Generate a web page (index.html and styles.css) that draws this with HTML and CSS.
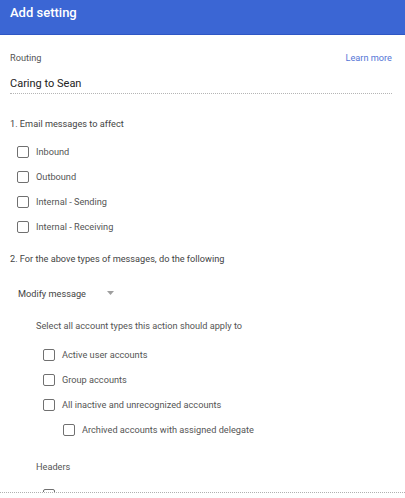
FILE: index.html
```html
<!DOCTYPE html>
<html>
<head>
<meta charset="utf-8">
<link rel="stylesheet" href="styles.css">
</head>
<body>
<div class="dialog">
  <header class="bar"><h1 class="title">Add setting</h1></header>
  <main class="content">
    <div class="row-between">
      <span class="label">Routing</span>
      <a class="link">Learn more</a>
    </div>
    <div class="name-field">Caring to Sean</div>

    <div class="section">1. Email messages to affect</div>
    <ul class="checks">
      <li class="check"><span class="box"></span><span>Inbound</span></li>
      <li class="check"><span class="box"></span><span>Outbound</span></li>
      <li class="check"><span class="box"></span><span>Internal - Sending</span></li>
      <li class="check"><span class="box"></span><span>Internal - Receiving</span></li>
    </ul>

    <div class="section second">2. For the above types of messages, do the following</div>
    <div class="select">
      <span>Modify message</span>
      <svg class="caret" width="7" height="4" viewBox="0 0 7 4"><path d="M0 0h7L3.5 4z" fill="#9e9e9e"/></svg>
    </div>

    <div class="sub">
      <div class="sub-title">Select all account types this action should apply to</div>
      <ul class="checks">
        <li class="check"><span class="box"></span><span>Active user accounts</span></li>
        <li class="check"><span class="box"></span><span>Group accounts</span></li>
        <li class="check"><span class="box"></span><span>All inactive and unrecognized accounts</span></li>
        <li class="check nested"><span class="box"></span><span>Archived accounts with assigned delegate</span></li>
      </ul>
      <div class="headers">Headers</div>
      <div class="check"><span class="box"></span></div>
    </div>
  </main>
  <div class="footer-line"></div>
</div>
</body>
</html>
```

FILE: styles.css
```css
* { box-sizing: border-box; }
html, body { margin: 0; padding: 0; }
body {
  width: 405px;
  height: 498px;
  overflow: hidden;
  background: #fff;
  font-family: Roboto, "Liberation Sans", Arial, sans-serif;
  color: #3c3c3c;
}
.dialog {
  position: relative;
  width: 405px;
  height: 498px;
  overflow: hidden;
}
.bar {
  height: 35px;
  background: #3b66d4;
  padding: 5px 10px 0;
  border-bottom: 1px solid #2e56c4;
}
.title {
  margin: 0;
  font-size: 13px;
  font-weight: 500;
  color: #fff;
  line-height: 16px;
}
.content {
  padding: 15px 13px 0 10px;
}
.row-between {
  display: flex;
  justify-content: space-between;
  align-items: center;
  height: 14px;
}
.label {
  font-size: 9.2px;
  color: #555;
}
.link {
  font-size: 9.2px;
  color: #5576d6;
}
.name-field {
  margin-top: 13px;
  font-size: 11px;
  color: #222;
  line-height: 14px;
  padding-bottom: 2px;
  border-bottom: 1px dotted #b5b5b5;
}
.section {
  margin-top: 24px;
  font-size: 9.2px;
  color: #444;
  line-height: 12px;
}
.section.second { margin-top: 20px; }
.checks {
  list-style: none;
  margin: 15px 0 0;
  padding: 0 0 0 7px;
  display: flex;
  flex-direction: column;
  gap: 12px;
}
.check {
  display: flex;
  align-items: center;
  gap: 7px;
  height: 13px;
  font-size: 9.2px;
  color: #555;
}
.box {
  width: 12px;
  height: 12px;
  border: 1.5px solid #707070;
  border-radius: 2px;
  flex: none;
}
.check.nested { margin-left: 20px; }
.select {
  margin: 22px 0 0 8px;
  display: flex;
  align-items: center;
  gap: 21px;
  font-size: 9.2px;
  color: #444;
  height: 12px;
}
.caret { margin-top: -1px; }
.sub {
  padding-left: 26px;
}
.sub-title {
  margin-top: 21px;
  font-size: 9.2px;
  color: #555;
  line-height: 12px;
}
.sub .checks { margin-top: 16px; }
.headers {
  margin-top: 25px;
  font-size: 9.2px;
  color: #555;
  line-height: 12px;
}
.sub > .check { margin: 15px 0 0 7px; }
.footer-line {
  position: absolute;
  left: 0;
  right: 0;
  top: 492px;
  height: 6px;
  background: #fff;
  border-top: 1px dotted #b0b0b0;
}
```
